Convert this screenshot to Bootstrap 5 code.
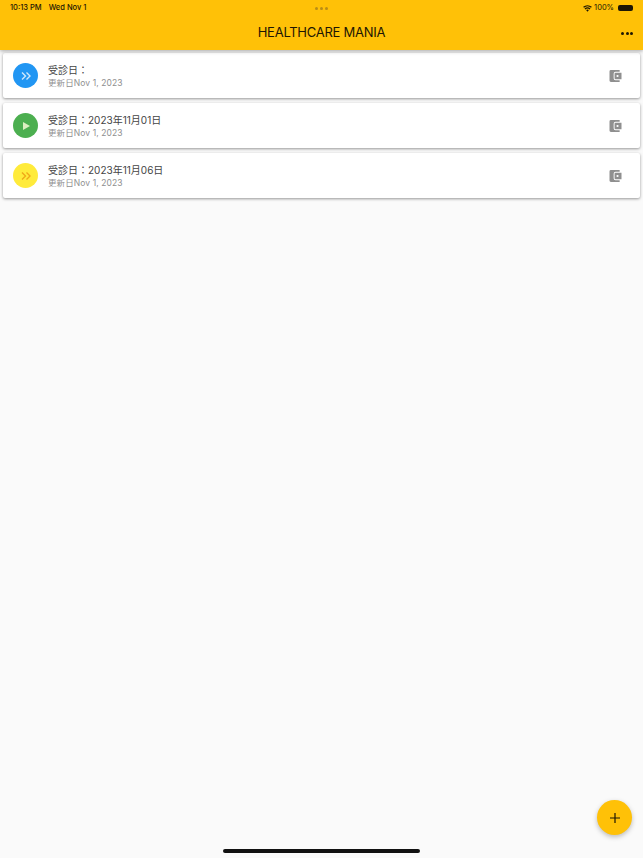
<!DOCTYPE html>
<html lang="ja">
  <head>
    <meta charset="UTF-8" />
    <meta name="viewport" content="width=device-width, initial-scale=1.0" />
    <title>Healthcare Mania</title>
    <link
      rel="stylesheet"
      href="https://cdn.jsdelivr.net/npm/bootstrap@5.3.0/dist/css/bootstrap.min.css"
    />
    <style>
      html,
      body {
        height: 100%;
      }
      body {
        font-family: Inter, "Noto Sans CJK JP", sans-serif;
        background-color: #fafafa;
        overflow: hidden;
      }
      .app-bar {
        height: 50px;
        background: #ffc107;
        box-shadow: 0 1px 4px rgba(0, 0, 0, 0.35);
        color: #1d1604;
      }
      .status-row {
        height: 15px;
        padding: 1px 10px 0;
        font-size: 7.5px;
        font-weight: 500;
        line-height: 14px;
      }
      .status-side {
        flex: 1 1 0;
      }
      .status-gap {
        gap: 7px;
      }
      .status-right {
        gap: 2px;
      }
      .status-pct {
        font-weight: 400;
      }
      .grabber {
        gap: 2px;
      }
      .grabber i {
        width: 3px;
        height: 3px;
        border-radius: 50%;
        background: #b98d16;
        display: block;
      }
      .battery {
        width: 15px;
        height: 6px;
        background: #1d1604;
        border-radius: 2px;
        margin-left: 2px;
      }
      .tool-row {
        height: 35px;
        padding: 1px 10px 0 10px;
      }
      .app-title {
        font-size: 13px;
        font-weight: 400;
        letter-spacing: -0.25px;
        margin: 0;
      }
      .tool-side {
        width: 12px;
      }
      .more-dots {
        gap: 1.5px;
      }
      .more-dots i {
        width: 3px;
        height: 3px;
        border-radius: 50%;
        background: #1d1604;
        display: block;
      }
      .rec-list {
        padding: 3px 3px 0;
        gap: 5px;
      }
      .rec-card {
        height: 45px;
        border: 0;
        border-radius: 2px;
        background: #fff;
        box-shadow: 0 1px 3px rgba(0, 0, 0, 0.4);
        padding: 0 18px 0 10px;
        gap: 10px;
      }
      .rec-icon {
        width: 25px;
        height: 25px;
        border-radius: 50%;
        flex: none;
      }
      .rec-blue {
        background: #2196f3;
      }
      .rec-green {
        background: #4caf50;
      }
      .rec-yellow {
        background: #ffeb3b;
      }
      .rec-text {
        padding-top: 2px;
      }
      .rec-title {
        font-size: 10px;
        line-height: 13px;
        color: #444;
      }
      .rec-sub {
        font-size: 8.5px;
        line-height: 13px;
        letter-spacing: 0.1px;
        color: #8f8f8f;
      }
      .fab-add {
        position: absolute;
        right: 11px;
        bottom: 23px;
        width: 35px;
        height: 35px;
        padding: 0;
        border: 0;
        border-radius: 50%;
        background: #ffc107;
        box-shadow: 0 2px 5px rgba(0, 0, 0, 0.25);
      }
      .home-bar {
        position: absolute;
        left: 223px;
        bottom: 5px;
        width: 197px;
        height: 4px;
        border-radius: 2px;
        background: #111;
      }
    </style>
  </head>
  <body>
    <header class="app-bar position-relative">
      <div class="status-row d-flex justify-content-between align-items-center">
        <div class="status-side d-flex status-gap">
          <span>10:13 PM</span>
          <span>Wed Nov 1</span>
        </div>
        <div class="grabber d-flex"><i></i><i></i><i></i></div>
        <div class="status-side d-flex justify-content-end align-items-center status-right">
          <svg width="9" height="7" viewBox="0 0 10 8" aria-hidden="true">
            <path
              d="M5 7.6 3.4 5.8a2.4 2.4 0 0 1 3.2 0ZM2.6 5 1.6 3.9a5.2 5.2 0 0 1 6.8 0L7.4 5a3.7 3.7 0 0 0-4.8 0ZM1 3.2 0 2.1a7.6 7.6 0 0 1 10 0L9 3.2a6.1 6.1 0 0 0-8 0Z"
              fill="#1d1604"
            />
          </svg>
          <span class="status-pct">100%</span>
          <span class="battery"></span>
        </div>
      </div>
      <div class="tool-row d-flex justify-content-between align-items-center">
        <span class="tool-side"></span>
        <h1 class="app-title">HEALTHCARE MANIA</h1>
        <span class="tool-side more-dots d-flex align-items-center">
          <i></i><i></i><i></i>
        </span>
      </div>
    </header>

    <main class="rec-list d-flex flex-column">
      <div class="rec-card d-flex align-items-center">
        <span class="rec-icon rec-blue d-flex align-items-center justify-content-center">
          <svg width="12" height="12" viewBox="0 0 12 12" aria-hidden="true">
            <path d="M2 2.5 5.5 6 2 9.5M6.5 2.5 10 6 6.5 9.5" fill="none" stroke="#cfe8fc" stroke-width="1.4" />
          </svg>
        </span>
        <div class="rec-text flex-grow-1">
          <div class="rec-title">受診日：</div>
          <div class="rec-sub">更新日Nov 1, 2023</div>
        </div>
        <svg width="13" height="12" viewBox="0 0 13 13" aria-hidden="true">
          <path d="M1.5 0H11v2H6.5A2 2 0 0 0 4.5 4v5a2 2 0 0 0 2 2H11v2H1.5A1.5 1.5 0 0 1 0 11.5v-10A1.5 1.5 0 0 1 1.5 0Z" fill="#8f8f8f" />
          <path d="M6.5 3H13v7H6.5A1 1 0 0 1 5.5 9V4a1 1 0 0 1 1-1Zm2.2 2.3a1.2 1.2 0 1 0 0 2.4 1.2 1.2 0 0 0 0-2.4Z" fill="#8f8f8f" fill-rule="evenodd" />
        </svg>
      </div>

      <div class="rec-card d-flex align-items-center">
        <span class="rec-icon rec-green d-flex align-items-center justify-content-center">
          <svg width="12" height="12" viewBox="0 0 12 12" aria-hidden="true">
            <path d="M3 2 10 6 3 10Z" fill="#dcefc0" />
          </svg>
        </span>
        <div class="rec-text flex-grow-1">
          <div class="rec-title">受診日：2023年11月01日</div>
          <div class="rec-sub">更新日Nov 1, 2023</div>
        </div>
        <svg width="13" height="12" viewBox="0 0 13 13" aria-hidden="true">
          <path d="M1.5 0H11v2H6.5A2 2 0 0 0 4.5 4v5a2 2 0 0 0 2 2H11v2H1.5A1.5 1.5 0 0 1 0 11.5v-10A1.5 1.5 0 0 1 1.5 0Z" fill="#8f8f8f" />
          <path d="M6.5 3H13v7H6.5A1 1 0 0 1 5.5 9V4a1 1 0 0 1 1-1Zm2.2 2.3a1.2 1.2 0 1 0 0 2.4 1.2 1.2 0 0 0 0-2.4Z" fill="#8f8f8f" fill-rule="evenodd" />
        </svg>
      </div>

      <div class="rec-card d-flex align-items-center">
        <span class="rec-icon rec-yellow d-flex align-items-center justify-content-center">
          <svg width="12" height="12" viewBox="0 0 12 12" aria-hidden="true">
            <path d="M2 2.5 5.5 6 2 9.5M6.5 2.5 10 6 6.5 9.5" fill="none" stroke="#f0a818" stroke-width="1.4" />
          </svg>
        </span>
        <div class="rec-text flex-grow-1">
          <div class="rec-title">受診日：2023年11月06日</div>
          <div class="rec-sub">更新日Nov 1, 2023</div>
        </div>
        <svg width="13" height="12" viewBox="0 0 13 13" aria-hidden="true">
          <path d="M1.5 0H11v2H6.5A2 2 0 0 0 4.5 4v5a2 2 0 0 0 2 2H11v2H1.5A1.5 1.5 0 0 1 0 11.5v-10A1.5 1.5 0 0 1 1.5 0Z" fill="#8f8f8f" />
          <path d="M6.5 3H13v7H6.5A1 1 0 0 1 5.5 9V4a1 1 0 0 1 1-1Zm2.2 2.3a1.2 1.2 0 1 0 0 2.4 1.2 1.2 0 0 0 0-2.4Z" fill="#8f8f8f" fill-rule="evenodd" />
        </svg>
      </div>
    </main>

    <button type="button" class="fab-add d-flex align-items-center justify-content-center" aria-label="add">
      <svg width="10" height="10" viewBox="0 0 10 10" aria-hidden="true">
        <path d="M5 0v10M0 5h10" stroke="#1d1604" stroke-width="1.2" />
      </svg>
    </button>
    <div class="home-bar"></div>

    <script src="https://cdn.jsdelivr.net/npm/bootstrap@5.3.0/dist/js/bootstrap.bundle.min.js"></script>
  </body>
</html>
